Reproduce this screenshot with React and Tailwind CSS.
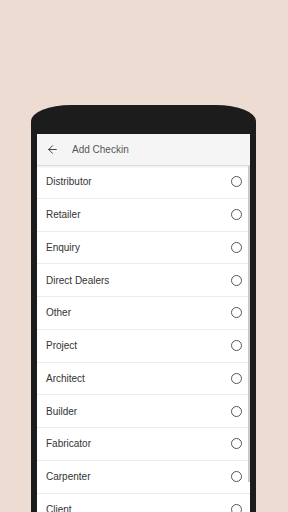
import { ArrowLeft } from 'lucide-react';

const ITEMS = [
  'Distributor',
  'Retailer',
  'Enquiry',
  'Direct Dealers',
  'Other',
  'Project',
  'Architect',
  'Builder',
  'Fabricator',
  'Carpenter',
  'Client',
  'Contractor',
];

export default function App() {
  return (
    <div
      className="w-[288px] h-[512px] overflow-hidden bg-[#ecdcd2] pt-[105px] pl-[31px]"
      style={{ fontFamily: '"Liberation Sans", Arial, sans-serif' }}
    >
      <div className="w-[225px] h-[420px] bg-[#1c1c1c] rounded-tl-[40px_16px] rounded-tr-[40px_16px] pt-[29px] px-[6px]">
        <div className="bg-white h-full flex flex-col">
          <div className="h-[32px] bg-[#f5f5f5] border-b border-[#dcdcdc] shadow-[0_1px_2px_rgba(0,0,0,0.08)] flex items-center px-[9px] shrink-0">
            <ArrowLeft size={13} strokeWidth={1.7} className="text-[#333]" />
            <span className="ml-[13px] text-[10px] text-[#555]">Add Checkin</span>
          </div>
          <div className="relative flex-1">
            <div className="absolute right-0 top-0 w-[2px] h-[316px] bg-[#c9c9c9]" />
            {ITEMS.map((item) => (
              <div
                key={item}
                className="h-[32.75px] border-b border-[#ebebeb] flex items-center justify-between pl-[9px] pr-[8px]"
              >
                <span className="text-[10px] text-[#333]">{item}</span>
                <span className="w-[11px] h-[11px] rounded-full border-[1.3px] border-[#555]" />
              </div>
            ))}
          </div>
        </div>
      </div>
    </div>
  );
}
